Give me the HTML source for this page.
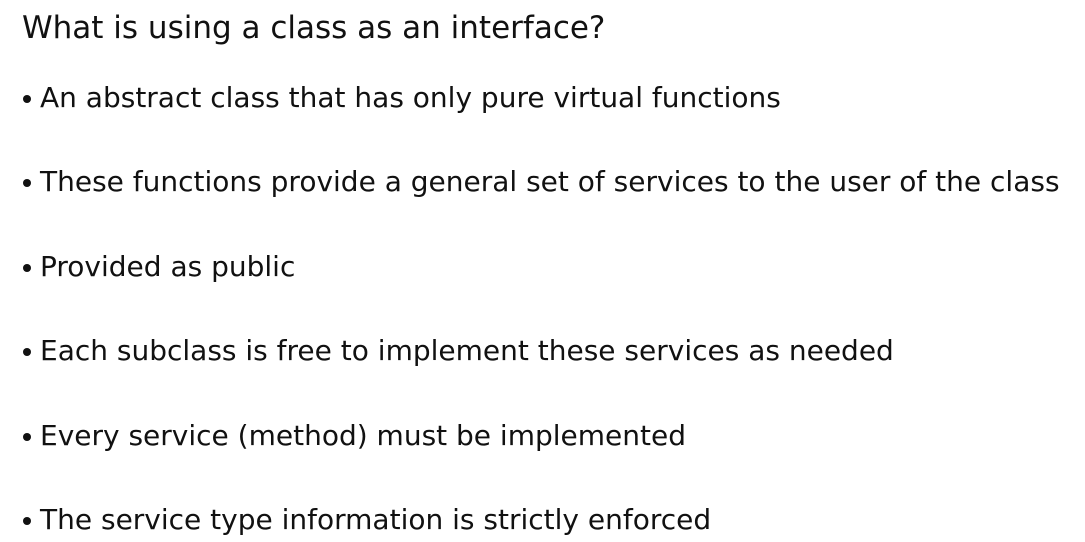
<!DOCTYPE html>
<html><head><meta charset="utf-8"><style>
html,body{margin:0;padding:0;background:#fff;}
body{width:1085px;height:542px;position:relative;overflow:hidden;font-family:"DejaVu Sans","Liberation Sans",sans-serif;color:#111;}
.t{position:absolute;left:22px;top:10px;font-size:31px;white-space:nowrap;}
.b{position:absolute;left:40px;font-size:28px;white-space:nowrap;}
.b:before{content:"";position:absolute;left:-17px;top:50%;width:8px;height:8px;border-radius:50%;background:#111;margin-top:-3px;}
</style></head><body>
<div class="t">What is using a class as an interface?</div>
<div class="b" style="top:81px">An abstract class that has only pure virtual functions</div>
<div class="b" style="top:165px">These functions provide a general set of services to the user of the class</div>
<div class="b" style="top:250px">Provided as public</div>
<div class="b" style="top:334px">Each subclass is free to implement these services as needed</div>
<div class="b" style="top:419px">Every service (method) must be implemented</div>
<div class="b" style="top:503px">The service type information is strictly enforced</div>
</body></html>
